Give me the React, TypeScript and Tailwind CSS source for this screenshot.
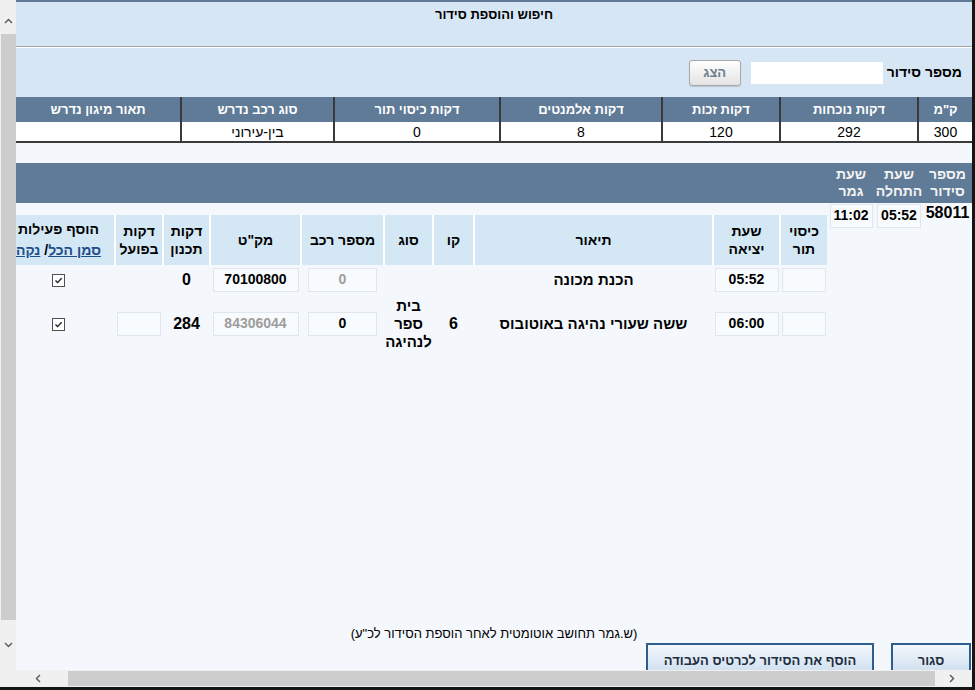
import React from 'react';

const font = "font-['Liberation_Sans',Arial,'DejaVu_Sans',sans-serif]";

const summaryCols = 'grid-cols-[55px_138px_118px_162px_166px_153px_1fr]';
const outerCols = 'grid-cols-[49px_48px_48px_1fr]';
const activityCols = 'grid-cols-[48px_67px_239px_41px_49px_83px_91px_47px_48px_98px]';

const summary = [
  { label: 'ק"מ', value: '300' },
  { label: 'דקות נוכחות', value: '292' },
  { label: 'דקות זכות', value: '120' },
  { label: 'דקות אלמנטים', value: '8' },
  { label: 'דקות כיסוי תור', value: '0' },
  { label: 'סוג רכב נדרש', value: 'בין-עירוני' },
  { label: 'תאור מיגון נדרש', value: '' },
];

function Chevron({ dir }: { dir: 'up' | 'down' | 'left' | 'right' }) {
  const d = {
    up: 'M1 6 L4.5 2.5 L8 6',
    down: 'M1 3 L4.5 6.5 L8 3',
    left: 'M6 1 L2.5 4.5 L6 8',
    right: 'M3 1 L6.5 4.5 L3 8',
  }[dir];
  return (
    <svg viewBox="0 0 9 9" className="h-[9px] w-[9px]">
      <path d={d} fill="none" stroke="#606060" strokeWidth="1.5" />
    </svg>
  );
}

function VerticalScrollbar() {
  return (
    <div className="flex w-[16px] shrink-0 flex-col bg-[#f0f0f0]">
      <div className="flex h-[34px] items-end justify-center pb-[8px]">
        <Chevron dir="up" />
      </div>
      <div className="ml-[1px] h-[586px] bg-[#cdcdcd]" />
      <div className="flex flex-1 items-center justify-center pb-[2px]">
        <Chevron dir="down" />
      </div>
    </div>
  );
}

function HorizontalScrollbar() {
  return (
    <div className="flex h-[17px] shrink-0 bg-[#f0f0f0]">
      <div className="flex w-[68px] items-center justify-center pl-[8px]">
        <Chevron dir="left" />
      </div>
      <div className="my-[1px] w-[867px] bg-[#cdcdcd]" />
      <div className="flex flex-1 items-center justify-center pr-[4px]">
        <Chevron dir="right" />
      </div>
    </div>
  );
}

function Box({ children, w, muted }: { children?: React.ReactNode; w: string; muted?: boolean }) {
  return (
    <div
      className={`h-[24px] ${w} border border-[#dfe6ed] bg-[#f8fbfe] pt-[1px] text-center text-[14px] font-bold leading-[18px] ${
        muted ? 'text-[#9d9d9d]' : 'text-black'
      }`}
    >
      {children}
    </div>
  );
}

function Check() {
  return (
    <span className="flex h-[13px] w-[13px] items-center justify-center border border-[#505050] bg-white">
      <svg viewBox="0 0 9 9" className="h-[9px] w-[9px]">
        <path d="M1.5 4.6 L3.6 6.6 L7.6 2.2" fill="none" stroke="#1f1f1f" strokeWidth="1.4" />
      </svg>
    </span>
  );
}

const cell = 'flex items-center justify-center border-l-2 border-transparent';
const big = 'text-[16px] font-bold';
const desc = 'text-[15px] font-bold';

function ActivityTable() {
  const headers = ['כיסוי תור', 'שעת יציאה', 'תיאור', 'קו', 'סוג', 'מספר רכב', 'מק"ט', 'דקות תכנון', 'דקות בפועל'];
  return (
    <div>
      <div className={`grid ${activityCols} h-[50px] text-[14px] font-bold leading-[18px]`}>
        {headers.map((h) => (
          <div
            key={h}
            className="flex items-center justify-center border-l-2 border-white bg-[#d3e7f5] px-[2px] text-center"
          >
            {h}
          </div>
        ))}
        <div className="flex flex-col items-center justify-center bg-[#d3e7f5] pr-[13px] leading-[21px] whitespace-nowrap">
          <span>הוסף פעילות</span>
          <span>
            <a className="text-[#1f4e8c] underline">סמן הכל</a>/ <a className="text-[#1f4e8c] underline">נקה</a>
          </span>
        </div>
      </div>

      <div className={`grid ${activityCols} h-[30px]`}>
        <div className={cell}><Box w="w-[44px]" /></div>
        <div className={cell}><Box w="w-[64px]">05:52</Box></div>
        <div className={`${cell} ${desc}`}>הכנת מכונה</div>
        <div className={cell} />
        <div className={cell} />
        <div className={cell}><Box w="w-[69px]" muted>0</Box></div>
        <div className={cell}><Box w="w-[86px]">70100800</Box></div>
        <div className={`${cell} ${big}`}>0</div>
        <div className={cell} />
        <div className="flex items-center justify-center pr-[13px]"><Check /></div>
      </div>

      <div className={`grid ${activityCols} h-[58px]`}>
        <div className={cell}><Box w="w-[44px]" /></div>
        <div className={cell}><Box w="w-[64px]">06:00</Box></div>
        <div className={`${cell} ${desc}`}>ששה שעורי נהיגה באוטובוס</div>
        <div className={`${cell} ${big}`}>6</div>
        <div className={`${cell} ${desc} text-center leading-[18px]`}>בית ספר לנהיגה</div>
        <div className={cell}><Box w="w-[69px]">0</Box></div>
        <div className={cell}><Box w="w-[86px]" muted>84306044</Box></div>
        <div className={`${cell} ${big}`}>284</div>
        <div className={cell}><Box w="w-[44px]" /></div>
        <div className="flex items-center justify-center pr-[13px]"><Check /></div>
      </div>
    </div>
  );
}

export default function App() {
  return (
    <div className={`h-[690px] w-[975px] overflow-hidden bg-[#151515] ${font}`}>
      <div className="flex h-[687px] w-[972px] flex-col">
        <div className="flex min-h-0 flex-1">
          <VerticalScrollbar />
          <main dir="rtl" className="flex min-w-0 flex-1 flex-col overflow-hidden bg-[#f4f8fc] text-black">
            <div className="h-[2px] bg-[#5f7996]" />
            <div className="h-[44px] bg-[#d6e6f4] pt-[5px] text-center text-[13px] font-bold leading-[16px]">
              חיפוש והוספת סידור
            </div>
            <div className="h-px bg-[#a5a5a5]" />
            <div className="h-px bg-white" />

            <div className="flex h-[49px] items-center bg-[#d6e6f4] pr-[10px]">
              <span className="text-[14px] font-bold">מספר סידור</span>
              <input className="mr-[4px] h-[22px] w-[132px] bg-white outline-none" />
              <button className="mr-[10px] h-[26px] w-[52px] rounded-[3px] border border-[#a8a8a8] bg-linear-to-b from-white to-[#e3e3e3] text-[13px] font-bold text-[#6f7e8e] shadow-[0_1px_1px_rgba(0,0,0,0.15)]">
                הצג
              </button>
            </div>

            <div className={`grid ${summaryCols} h-[25px] bg-[#607b97] text-[13px] font-bold text-white`}>
              {summary.map((c) => (
                <div key={c.label} className="flex items-center justify-center border-l-2 border-[#3a3a3a] last:border-l-0">
                  {c.label}
                </div>
              ))}
            </div>
            <div className={`grid ${summaryCols} h-[21px] border-b-2 border-[#3a3a3a] bg-white text-[14px]`}>
              {summary.map((c) => (
                <div key={c.label} className="flex items-center justify-center border-l-2 border-[#3a3a3a] last:border-l-0">
                  {c.value}
                </div>
              ))}
            </div>

            <div className="h-[20px]" />

            <div className={`grid ${outerCols} h-[40px] bg-[#607b97] text-[14px] font-bold leading-[17px] text-[#f3f3f3]`}>
              <div className="flex items-center justify-center text-center">מספר סידור</div>
              <div className="flex items-center justify-center text-center">שעת התחלה</div>
              <div className="flex items-center justify-center text-center">שעת גמר</div>
              <div />
            </div>
            <div className={`grid ${outerCols}`}>
              <div className="text-center text-[16px] font-bold leading-[20px]">58011</div>
              <div className="flex justify-center pt-[1px]"><Box w="w-[44px]">05:52</Box></div>
              <div className="flex justify-center pt-[1px]"><Box w="w-[43px]">11:02</Box></div>
              <div className="pt-[12px]">
                <ActivityTable />
              </div>
            </div>

            <div className="mt-auto mb-[-9px] flex flex-col">
              <div className="mb-[1px] text-center text-[13px] leading-[16px]">
                (ש.גמר תחושב אוטומטית לאחר הוספת הסידור לכ"ע)
              </div>
              <div className="flex gap-[17px] pr-[1px]">
                <button className="h-[36px] w-[80px] border-2 border-[#2d5e8e] bg-linear-to-b from-[#f3f8fc] to-[#c9dbed] text-[13px] font-bold text-[#1f2d3d]">
                  סגור
                </button>
                <button className="h-[36px] w-[228px] border-2 border-[#2d5e8e] bg-linear-to-b from-[#f3f8fc] to-[#c9dbed] text-[13px] font-bold text-[#1f2d3d]">
                  הוסף את הסידור לכרטיס העבודה
                </button>
              </div>
            </div>
          </main>
        </div>
        <HorizontalScrollbar />
      </div>
    </div>
  );
}
